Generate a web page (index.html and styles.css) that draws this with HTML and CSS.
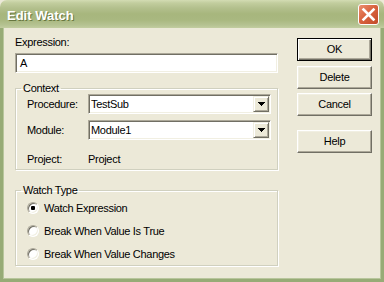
FILE: index.html
```html
<!DOCTYPE html>
<html lang="en">
<head>
    <meta charset="UTF-8">
    <title>Edit Watch</title>
    <link rel="stylesheet" href="styles.css">
</head>
<body>
    <div class="window">
        <div class="titlebar">
            <span class="title">Edit Watch</span>
            <span class="close">
                <svg width="19" height="19" viewBox="0 0 19 19">
                    <path d="M4.5 4.5L14.5 14.5M14.5 4.5L4.5 14.5" stroke="#fff" stroke-width="2.6" stroke-linecap="square"/>
                </svg>
            </span>
        </div>
        <div class="client">
            <div class="main">
                <label class="label">Expression:</label>
                <div class="textbox">A</div>

                <fieldset class="group context">
                    <legend>Context</legend>
                    <div class="row">
                        <span class="rowlabel">Procedure:</span>
                        <div class="combo">
                            <span class="value">TestSub</span>
                            <span class="drop">
                                <svg width="7" height="4" viewBox="0 0 7 4"><rect x="0" y="0" width="7" height="1"/><rect x="1" y="1" width="5" height="1"/><rect x="2" y="2" width="3" height="1"/><rect x="3" y="3" width="1" height="1"/></svg>
                            </span>
                        </div>
                    </div>
                    <div class="row second">
                        <span class="rowlabel">Module:</span>
                        <div class="combo">
                            <span class="value">Module1</span>
                            <span class="drop">
                                <svg width="7" height="4" viewBox="0 0 7 4"><rect x="0" y="0" width="7" height="1"/><rect x="1" y="1" width="5" height="1"/><rect x="2" y="2" width="3" height="1"/><rect x="3" y="3" width="1" height="1"/></svg>
                            </span>
                        </div>
                    </div>
                    <div class="row info">
                        <span class="rowlabel">Project:</span>
                        <span>Project</span>
                    </div>
                </fieldset>

                <fieldset class="group watch">
                    <legend>Watch Type</legend>
                    <div class="radio"><span class="dot checked"></span>Watch Expression</div>
                    <div class="radio"><span class="dot"></span>Break When Value Is True</div>
                    <div class="radio"><span class="dot"></span>Break When Value Changes</div>
                </fieldset>
            </div>

            <div class="buttons">
                <div class="btn default">OK</div>
                <div class="btn delete">Delete</div>
                <div class="btn cancel">Cancel</div>
                <div class="btn help">Help</div>
            </div>
        </div>
    </div>
</body>
</html>
```

FILE: styles.css
```css
body {
    margin: 0;
    font-family: "Liberation Sans", Arial, sans-serif;
    font-size: 11px;
    letter-spacing: -0.3px;
    color: #000;
}
.window {
    width: 384px;
    height: 282px;
    display: flex;
    flex-direction: column;
    background-color: #ece9d8;
}
.titlebar {
    height: 28px;
    flex: none;
    display: flex;
    align-items: center;
    justify-content: space-between;
    padding: 0 5px 0 7px;
    border-radius: 7px 7px 0 0;
    background: linear-gradient(to bottom, #d3dcb3 0, #c2cd9e 3px, #b3c08d 8px, #a7b67d 14px, #a9b880 20px, #b5c291 25px, #c2cda0 28px);
}
.title {
    color: #fff;
    font-weight: bold;
    font-size: 13px;
    letter-spacing: 0;
    text-shadow: 1px 1px 0 #67763f;
    margin-top: 2px;
}
.close {
    width: 19px;
    height: 19px;
    display: block;
    border: 1px solid #fff;
    border-radius: 3px;
    background: linear-gradient(135deg, #ec9070 0, #d9643f 45%, #c24a29 100%);
    margin-top: 1px;
}
.close svg {
    display: block;
}
.client {
    flex: 1;
    display: flex;
    padding: 8px 0 0 12px;
    border-left: 3px solid #97ab76;
    border-right: 3px solid #97ab76;
    border-bottom: 3px solid #97ab76;
    box-shadow: inset 1px 0 #b8c69c, inset -1px 0 #b8c69c, inset 0 -1px #b8c69c;
}
.main {
    width: 263px;
}
.label {
    display: block;
    line-height: 13px;
}
.textbox {
    margin-top: 4px;
    height: 20px;
    box-sizing: border-box;
    border: 1px solid;
    border-color: #aca899 #fff #fff #aca899;
    box-shadow: inset 1px 1px #716f64, inset -1px -1px #f1efe2;
    background-color: #fff;
    padding-left: 4px;
    line-height: 18px;
}
.group {
    margin: 9px 0 0;
    padding: 0 6px 4px 11px;
    border: 1px solid #d0d0bf;
    box-shadow: inset 1px 1px #fff, 1px 1px #fff;
    min-width: 0;
}
.group legend {
    padding: 0 2px;
    margin-left: -6px;
    line-height: 12px;
}
.watch {
    margin-top: 14px;
    padding-bottom: 0;
}
.row {
    display: flex;
    align-items: center;
    height: 20px;
}
.row.second {
    margin-top: 6px;
}
.row.info {
    height: 13px;
    margin-top: 12px;
}
.rowlabel {
    width: 61px;
    flex: none;
}
.combo {
    width: 183px;
    height: 20px;
    box-sizing: border-box;
    display: flex;
    justify-content: space-between;
    border: 1px solid;
    border-color: #aca899 #fff #fff #aca899;
    box-shadow: inset 1px 1px #716f64, inset -1px -1px #f1efe2;
    background-color: #fff;
}
.combo .value {
    padding-left: 2px;
    line-height: 18px;
}
.drop {
    width: 16px;
    height: 16px;
    margin: 1px;
    box-sizing: border-box;
    display: flex;
    align-items: center;
    justify-content: center;
    border: 1px solid;
    border-color: #f1efe2 #716f64 #716f64 #f1efe2;
    box-shadow: inset 1px 1px #fff, inset -1px -1px #aca899;
    background-color: #ece9d8;
}
.drop svg {
    display: block;
    margin-left: 1px;
}
.radio {
    display: flex;
    align-items: center;
    height: 23px;
}
.dot {
    width: 12px;
    height: 12px;
    box-sizing: border-box;
    margin-right: 5px;
    border-radius: 50%;
    border: 1px solid;
    border-color: #aca899 #fff #fff #aca899;
    box-shadow: inset 1px 1px #716f64, inset -1px -1px #f1efe2;
    background-color: #fff;
    display: flex;
    align-items: center;
    justify-content: center;
}
.dot.checked::after {
    content: "";
    width: 4px;
    height: 4px;
    border-radius: 1px;
    background-color: #000;
}
.buttons {
    margin-left: 19px;
    padding-top: 2px;
    width: 75px;
}
.btn {
    width: 75px;
    height: 23px;
    box-sizing: border-box;
    text-align: center;
    line-height: 21px;
    background-color: #ece9d8;
    border: 1px solid;
    border-color: #fff #716f64 #716f64 #fff;
    box-shadow: inset -1px -1px #aca899, inset 1px 1px #f1efe2;
}
.btn.default {
    border-color: #000;
    box-shadow: inset 1px 1px #fff, inset -1px -1px #716f64, inset -2px -2px #aca899;
}
.btn.delete {
    margin-top: 5px;
}
.btn.cancel {
    margin-top: 4px;
}
.btn.help {
    margin-top: 14px;
}
```
